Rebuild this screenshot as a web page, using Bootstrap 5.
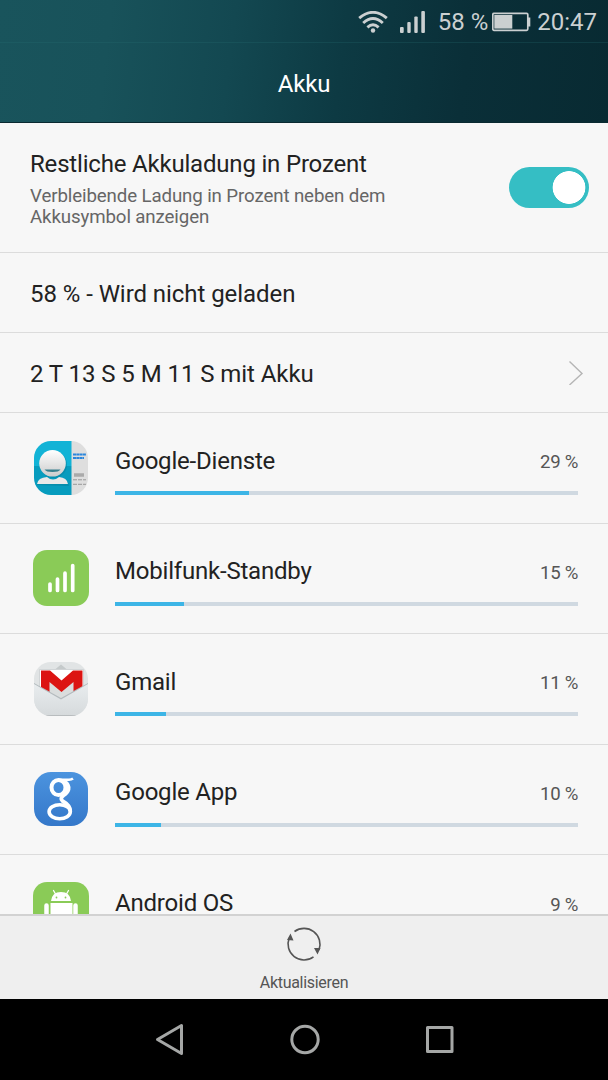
<!DOCTYPE html>
<html lang="de">
<head>
    <meta charset="UTF-8">
    <meta name="viewport" content="width=device-width, initial-scale=1.0">
    <title>Akku</title>
    <link href="https://cdn.jsdelivr.net/npm/bootstrap@5.3.3/dist/css/bootstrap.min.css" rel="stylesheet">
    <style>
        body {
            font-family: Roboto, "Liberation Sans", sans-serif;
            background-color: #f7f7f7;
            color: #222;
            font-size: 24px;
            line-height: 28px;
        }

        svg {
            display: block;
            flex-shrink: 0;
        }

        /* Kopfbereich */
        .top-area {
            height: 123px;
            background: linear-gradient(97deg, #19545c 0%, #18525a 18%, #134851 38%, #0d3a43 56%, #0a2f38 76%, #082a32 100%);
            border-bottom: 1px solid #0a2a31;
        }

        .status-bar {
            height: 43px;
            padding: 2px 11px 0 0;
            color: #cbd0d1;
            border-bottom: 1px solid rgba(40, 110, 115, .25);
        }

        .title-bar {
            height: 80px;
            padding-top: 2px;
            color: #fff;
            letter-spacing: -.2px;
        }

        /* Liste */
        .setting-row {
            height: 80px;
            padding: 2px 20px 0 30px;
            background: transparent;
            border-color: #dcdcdc;
            color: inherit;
            letter-spacing: -.06px;
        }

        .setting-row.tall {
            height: 130px;
            padding-top: 3px;
            padding-right: 19px;
            letter-spacing: -.19px;
        }

        .setting-hint {
            margin-top: 8px;
            font-size: 18.7px;
            line-height: 21px;
            color: #666;
            letter-spacing: -.12px;
        }

        .form-switch .akku-switch {
            width: 80px;
            height: 41px;
            margin: 0 0 3px;
            border: 0;
            background-color: #35bec4;
            background-image: radial-gradient(circle at 60px 20.5px, #fff 16px, transparent 16.7px) !important;
        }

        .app-row {
            height: 110.5px;
            padding: 0 30px 0 33px;
            background: transparent;
            border-color: #dcdcdc;
            color: inherit;
            line-height: 20px;
            letter-spacing: -.2px;
        }

        .app-row svg {
            margin-right: 26px;
        }

        .app-info {
            padding-top: 10.6px;
        }

        .app-percent {
            padding-top: 3.5px;
            font-size: 18.6px;
            line-height: 16px;
            letter-spacing: -.3px;
            color: #555;
        }

        .app-progress {
            height: 4px;
            margin-top: 20.6px;
            border-radius: 0;
            background-color: #d0d9e1;
        }

        .app-progress .progress-bar {
            background-color: #3db5e6;
        }

        /* Fußbereich */
        .action-bar {
            height: 85px;
            padding-top: 10px;
            background-color: #efefef;
            border-top: 2px solid #d2d2d2;
            font-size: 16px;
            line-height: 20px;
            letter-spacing: -.3px;
            color: #555;
        }

        .action-label {
            margin-top: 11px;
        }

        .nav-keys {
            height: 81px;
            background-color: #000;
        }
    </style>
</head>
<body class="vh-100 d-flex flex-column overflow-hidden">
    <header class="top-area flex-shrink-0">
        <div class="status-bar d-flex align-items-center justify-content-end">
            <svg width="30" height="22" viewBox="0 0 30 22" fill="none" stroke="#cbd0d1" stroke-width="2.9">
                <path d="M1.2 7.2Q15-4.5 28.8 7.2M5.2 12Q15 3.2 24.8 12M9.4 16.3Q15 11.3 20.6 16.3"/>
                <circle cx="15" cy="19.5" r="2.2" fill="#cbd0d1" stroke="none"/>
            </svg>
            <svg class="ms-2" width="34" height="22" viewBox="-4 0 34 22" fill="#cbd0d1">
                <rect x="0" y="16" width="3.7" height="6" rx="1"/>
                <rect x="7.3" y="11" width="3.4" height="11" rx="1"/>
                <rect x="14.3" y="5.5" width="3.4" height="16.5" rx="1"/>
                <rect x="21.3" y="0" width="3.6" height="22" rx="1"/>
            </svg>
            <span class="ms-2">58 %</span>
            <svg class="ms-1 me-1" width="41" height="20" viewBox="1 0 41 20">
                <rect x="1.8" y="1.3" width="35" height="17" rx="1.2" fill="none" stroke="#cbd0d1" stroke-width="1.7"/>
                <rect x="3.3" y="3" width="18" height="13.6" fill="#cbd0d1"/>
                <rect x="37" y="5.5" width="2.3" height="9" fill="#cbd0d1"/>
            </svg>
            <span>20:47</span>
        </div>
        <div class="title-bar d-flex align-items-center justify-content-center">Akku</div>
    </header>

    <main class="flex-grow-1 overflow-hidden">
        <div class="list-group list-group-flush">
            <div class="list-group-item setting-row tall d-flex align-items-center justify-content-between">
                <div>
                    <div>Restliche Akkuladung in Prozent</div>
                    <div class="setting-hint">Verbleibende Ladung in Prozent neben dem<br>Akkusymbol anzeigen</div>
                </div>
                <div class="form-check form-switch p-0 m-0">
                    <input class="form-check-input akku-switch" type="checkbox" role="switch" aria-label="Akkuladung in Prozent" checked>
                </div>
            </div>
            <div class="list-group-item setting-row d-flex align-items-center">58 % - Wird nicht geladen</div>
            <div class="list-group-item setting-row d-flex align-items-center justify-content-between">
                <span>2 T 13 S 5 M 11 S mit Akku</span>
                <svg class="me-1 mb-1" width="16" height="26" viewBox="0 0 16 26" fill="none" stroke="#b5b5b5" stroke-width="1.4">
                    <path d="M1.5 2.5L14 14.5L1.5 26"/>
                </svg>
            </div>

            <!-- Google-Dienste -->
            <div class="list-group-item app-row d-flex align-items-center">
                <svg width="56" height="56" viewBox="0 0 56 56">
                    <defs>
                        <clipPath id="dienste"><rect x="1" y="1" width="54" height="54" rx="17"/></clipPath>
                        <linearGradient id="kopf" x2="0" y2="1"><stop stop-color="#fff"/><stop offset="1" stop-color="#ccc"/></linearGradient>
                    </defs>
                    <g clip-path="url(#dienste)">
                        <path fill="#12b3d6" d="M0 0H39V26H0z"/>
                        <path fill="#079cbe" d="M0 26H39V56H0z"/>
                        <path fill="#dedede" d="M38.5 0H56V56H38.5z"/>
                        <path stroke="#2b86dc" stroke-width="1.8" stroke-dasharray="3 .3" d="M40 14.5H53M40 18H51"/>
                        <path stroke="#aaa" stroke-width="3.5" d="M41 35H51"/>
                        <path stroke="#999" d="M40 39.8H53M40 44.3H53" stroke-dasharray="4 1"/>
                    </g>
                    <path fill="#067e9a" opacity=".5" d="M4 45Q5 39 13 38.5Q20 43 27 38.5Q35 39 36 46z"/>
                    <path fill="#e9e9e9" d="M4 44Q5 37.5 14 37Q20 42 26 37Q34 37.5 35 44z"/>
                    <circle cx="20.5" cy="24.5" r="13.5" fill="#087f9d" opacity=".5"/>
                    <circle cx="19.5" cy="23.3" r="13.3" fill="url(#kopf)"/>
                    <path fill="#397f8d" d="M11.5 29.5H27.5Q26 32 19.5 32T11.5 29.5"/>
                </svg>
                <div class="app-info flex-grow-1">
                    <div class="d-flex justify-content-between"><span>Google-Dienste</span><span class="app-percent">29 %</span></div>
                    <div class="progress app-progress"><div class="progress-bar" style="width: 29%"></div></div>
                </div>
            </div>

            <!-- Mobilfunk-Standby -->
            <div class="list-group-item app-row d-flex align-items-center">
                <svg width="56" height="56" viewBox="0 0 56 56">
                    <rect width="56" height="56" rx="14" fill="#8acb57"/>
                    <path stroke="#fff" stroke-width="3.7" stroke-linecap="round" d="M17 34V40.5M24.5 29V40.5M32 23.2V40.5M39.7 15.5V40.5"/>
                </svg>
                <div class="app-info flex-grow-1">
                    <div class="d-flex justify-content-between"><span>Mobilfunk-Standby</span><span class="app-percent">15 %</span></div>
                    <div class="progress app-progress"><div class="progress-bar" style="width: 15%"></div></div>
                </div>
            </div>

            <!-- Gmail -->
            <div class="list-group-item app-row d-flex align-items-center">
                <svg width="56" height="56" viewBox="0 0 56 56">
                    <defs>
                        <clipPath id="gmail"><rect x="1" y="1" width="54" height="54" rx="17"/></clipPath>
                        <linearGradient id="umschlag" x2="0" y2="1"><stop stop-color="#e9edef"/><stop offset="1" stop-color="#d5d9db"/></linearGradient>
                    </defs>
                    <g clip-path="url(#gmail)">
                        <path fill="#e1e4e5" d="M0 0H56V56H0z"/>
                        <path fill="#c5cacb" d="M22 8.5L28 3.5L34 8.5z"/>
                        <path fill="#fff" stroke="#c9cdcf" stroke-width=".8" d="M6.5 8.5H50.5V40H6.5z"/>
                        <path fill="#dadddd" d="M15 19L28 29L41 19V38H15z"/>
                        <path fill="#dc1412" d="M8 9.5H17L28.5 19.5L40 9.5H49.5V31H40.5V21L28.5 31L16.5 21V31H8z"/>
                        <path fill="#b4bbbe" d="M0 21.5L28 37L56 21.5V24L28 39.5L0 24z"/>
                        <path fill="url(#umschlag)" d="M0 22.5L28 38.5L56 22.5V56H0z"/>
                        <path stroke="#b8bcbe" d="M0 54.5H56"/>
                    </g>
                </svg>
                <div class="app-info flex-grow-1">
                    <div class="d-flex justify-content-between"><span>Gmail</span><span class="app-percent">11 %</span></div>
                    <div class="progress app-progress"><div class="progress-bar" style="width: 11%"></div></div>
                </div>
            </div>

            <!-- Google App -->
            <div class="list-group-item app-row d-flex align-items-center">
                <svg width="56" height="56" viewBox="0 0 56 56" fill="none" stroke="#fff">
                    <defs>
                        <clipPath id="suche"><rect x="1" y="1" width="54" height="54" rx="17"/></clipPath>
                        <linearGradient id="blau" x2="0" y2="1"><stop stop-color="#4c94df"/><stop offset="1" stop-color="#3477c9"/></linearGradient>
                    </defs>
                    <path clip-path="url(#suche)" stroke="none" fill="url(#blau)" d="M0 0H56V56H0z"/>
                    <ellipse cx="25.5" cy="16.5" rx="7" ry="7.6" stroke-width="4"/>
                    <path stroke-width="2.6" d="M26 8.7H36Q38.5 8.7 40 7.5"/>
                    <path stroke-width="3.8" d="M31 10Q36.5 13.5 35.5 18.5Q34.5 22 30.5 24.5Q26.5 27.5 29.5 30Q37.5 34.5 37.3 40.5"/>
                    <ellipse cx="26.7" cy="40.8" rx="10.6" ry="7" stroke-width="3.6"/>
                </svg>
                <div class="app-info flex-grow-1">
                    <div class="d-flex justify-content-between"><span>Google App</span><span class="app-percent">10 %</span></div>
                    <div class="progress app-progress"><div class="progress-bar" style="width: 10%"></div></div>
                </div>
            </div>

            <!-- Android OS -->
            <div class="list-group-item app-row d-flex align-items-center">
                <svg width="56" height="56" viewBox="0 0 56 56">
                    <rect width="56" height="56" rx="14" fill="#8acb57"/>
                    <path fill="#fff" d="M18 19Q19 10 28 10T38 19zM17.5 21H39.5V40Q39 42 37 42H20Q18 42 17.5 40z"/>
                    <path stroke="#fff" stroke-width="1.3" stroke-linecap="round" d="M22.5 12L20.5 8.5M33.5 12L35.5 8.5"/>
                    <path stroke="#fff" stroke-width="4.5" stroke-linecap="round" d="M13.5 23.5V34M42.5 23.5V34"/>
                    <circle cx="23.5" cy="15.5" r=".9" fill="#8acb57"/>
                    <circle cx="32.5" cy="15.5" r=".9" fill="#8acb57"/>
                </svg>
                <div class="app-info flex-grow-1">
                    <div class="d-flex justify-content-between"><span>Android OS</span><span class="app-percent">9 %</span></div>
                    <div class="progress app-progress"><div class="progress-bar" style="width: 9%"></div></div>
                </div>
            </div>
        </div>
    </main>

    <div class="action-bar flex-shrink-0 d-flex flex-column align-items-center">
        <svg width="36" height="36" viewBox="0 0 36 36" fill="none" stroke="#555" stroke-width="1.6">
            <path d="M8.5 5.5A16 16 0 0 1 33 24M27.5 30.9A16 16 0 0 1 3.2 12"/>
            <path fill="#555" stroke="none" d="M4.5 7.5L7.5 14.5L1 14zM28 22L34.5 22L31.5 28.5z"/>
        </svg>
        <span class="action-label">Aktualisieren</span>
    </div>

    <!-- Navigationstasten -->
    <nav class="nav-keys flex-shrink-0 d-flex align-items-center justify-content-center" aria-label="Navigation">
        <svg width="304" height="36" viewBox="0 0 304 36" fill="none" stroke="#a5a7a6" stroke-width="3" stroke-linejoin="round">
            <path d="M5.5 17.5L29.5 3.5V31.5z"/>
            <circle cx="153" cy="17.5" r="13.2"/>
            <rect x="275.5" y="5.5" width="24.5" height="24"/>
        </svg>
    </nav>

    <script src="https://cdn.jsdelivr.net/npm/bootstrap@5.3.3/dist/js/bootstrap.bundle.min.js"></script>
</body>
</html>
